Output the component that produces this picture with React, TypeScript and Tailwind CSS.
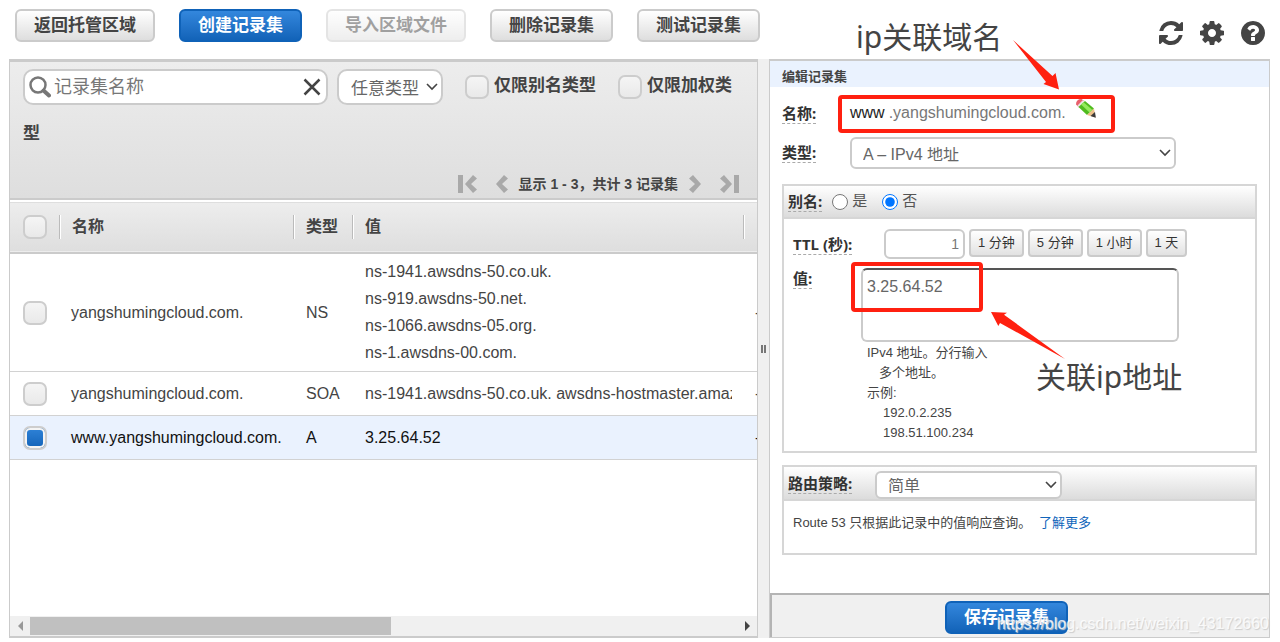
import type { ReactNode } from "react";
import clsx from "clsx";

const records = [
  {
    name: "yangshumingcloud.com.",
    type: "NS",
    values: [
      "ns-1941.awsdns-50.co.uk.",
      "ns-919.awsdns-50.net.",
      "ns-1066.awsdns-05.org.",
      "ns-1.awsdns-00.com.",
    ],
    selected: false,
  },
  {
    name: "yangshumingcloud.com.",
    type: "SOA",
    values: ["ns-1941.awsdns-50.co.uk. awsdns-hostmaster.amaz"],
    selected: false,
  },
  {
    name: "www.yangshumingcloud.com.",
    type: "A",
    values: ["3.25.64.52"],
    selected: true,
  },
];

const ttlPresets = ["1 分钟", "5 分钟", "1 小时", "1 天"];

const toolIcons = [
  {
    label: "刷新",
    path: "M1639 1056q0 5-1 7-64 268-268 434.5t-478 166.5q-146 0-282.5-55t-243.5-157l-129 129q-19 19-45 19t-45-19-19-45v-448q0-26 19-45t45-19h448q26 0 45 19t19 45-19 45l-137 137q71 66 161 102t187 36q134 0 250-65t186-179q11-17 53-117 8-23 30-23h192q13 0 22.5 9.5t9.5 22.5zm25-800v448q0 26-19 45t-45 19h-448q-26 0-45-19t-19-45 19-45l138-138q-148-137-349-137-134 0-250 65t-186 179q-11 17-53 117-8 23-30 23h-199q-13 0-22.5-9.5t-9.5-22.5v-7q65-268 270-434.5t480-166.5q146 0 284 55.5t245 156.5l130-129q19-19 45-19t45 19 19 45z",
  },
  {
    label: "设置",
    path: "M1152 896q0-106-75-181t-181-75-181 75-75 181 75 181 181 75 181-75 75-181zm512-109v222q0 12-8 23t-20 13l-185 28q-19 54-39 91 35 50 107 138 10 12 10 25t-9 23q-27 37-99 108t-94 71q-12 0-26-9l-138-108q-44 23-91 38-16 136-29 186-7 28-36 28h-222q-14 0-24.5-8.5t-11.5-21.5l-28-184q-49-16-90-37l-141 107q-10 9-25 9-14 0-25-11-126-114-165-168-7-10-7-23 0-12 8-23 15-21 51-66.5t54-70.5q-27-50-41-99l-183-27q-13-2-21-12.5t-8-23.5v-222q0-12 8-23t19-13l186-28q14-46 39-92-40-57-107-138-10-12-10-24 0-10 9-23 26-36 98.5-107.5t94.5-71.5q13 0 26 10l138 107q44-23 91-38 16-136 29-186 7-28 36-28h222q14 0 24.5 8.5t11.5 21.5l28 184q49 16 90 37l142-107q9-9 24-9 13 0 25 10 129 119 165 170 7 8 7 22 0 12-8 23-15 21-51 66.5t-54 70.5q26 50 41 98l183 28q13 2 21 12.5t8 23.5z",
  },
  {
    label: "帮助",
    path: "M1024 1376v-192q0-14-9-23t-23-9h-192q-14 0-23 9t-9 23v192q0 14 9 23t23 9h192q14 0 23-9t9-23zm256-672q0-88-55.5-163t-138.5-116-170-41q-243 0-371 213-15 24 8 42l132 100q7 6 19 6 16 0 25-12 53-68 86-92 34-24 86-24 48 0 85.5 26t37.5 59q0 38-20 61t-68 45q-63 28-115.5 86.5t-52.5 125.5v36q0 14 9 23t23 9h192q14 0 23-9t9-23q0-19 21.5-49.5t54.5-49.5q32-18 49-28.5t46-35 44.5-48 28-60.5 12.5-81zm384 192q0 209-103 385.5t-279.5 279.5-385.5 103-385.5-103-279.5-279.5-103-385.5 103-385.5 279.5-279.5 385.5-103 385.5 103 279.5 279.5 103 385.5z",
  },
];

function ToolbarButton({
  children,
  primary,
  disabled,
}: {
  children: ReactNode;
  primary?: boolean;
  disabled?: boolean;
}) {
  return (
    <button
      type="button"
      disabled={disabled}
      className={clsx(
        "h-[33px] shrink-0 rounded-md border-2 bg-linear-to-b px-[17px] text-[17px] leading-none font-bold whitespace-nowrap",
        primary
          ? "border-[#0f62b8] from-[#3387dd] to-[#1263b8] text-white"
          : "border-[#cbcbcb] from-white to-[#dedede] text-[#444]",
        disabled && "opacity-50",
      )}
    >
      {children}
    </button>
  );
}

function Checkbox({ id, label, checked }: { id: string; label?: string; checked?: boolean }) {
  return (
    <input
      id={id}
      type="checkbox"
      aria-label={label}
      defaultChecked={checked}
      className="size-6 appearance-none rounded-[7px] border-2 border-[#cdcdcd] bg-linear-to-b from-[#f5f5f5] to-[#e9e9e9] align-middle checked:from-[#2f83d8] checked:to-[#1263b8] checked:shadow-[inset_0_0_0_2px_#f4f4f4]"
    />
  );
}

function Chevron() {
  return (
    <svg
      viewBox="0 0 12 8"
      className="pointer-events-none absolute inset-y-0 right-[5px] my-auto h-2 w-3"
      fill="none"
      stroke="#444"
      strokeWidth="1.6"
    >
      <path d="M1 1l5 5 5-5" />
    </svg>
  );
}

function PagerArrow({ label, flip, bar }: { label: string; flip?: boolean; bar?: boolean }) {
  return (
    <button type="button" aria-label={label}>
      <svg
        viewBox={bar ? "0 0 20 18" : "7 0 13 18"}
        className={clsx("h-[18px]", bar ? "w-5" : "w-[13px]", flip && "-scale-x-100")}
        fill="#a9a9a9"
      >
        {bar && <path d="M0 0h5v18H0z" />}
        <path d="M15 0l4 3.500-6 5.500 6 5.500L15 18 7 9z" />
      </svg>
    </button>
  );
}

function FieldLabel({ htmlFor, children }: { htmlFor?: string; children: ReactNode }) {
  return (
    <label
      htmlFor={htmlFor}
      className="border-b border-dashed border-[#aaa] font-['Noto_Sans','Noto_Sans_CJK_SC',sans-serif] text-[15px] leading-[19px] font-bold whitespace-nowrap text-[#333]"
    >
      {children}
    </label>
  );
}

function Pencil() {
  return (
    <svg viewBox="0 0 20 20" className="h-5 w-5">
      <path d="M0 5.500Q0 0 5.500 0L8.500 2 3 8.500z" fill="#e8606c" />
      <path d="M1.500 6.500L7 1l2 1.500-5.500 6.500z" fill="#e9e4e4" />
      <path d="M2.500 8L9 2l9 7.500-7 6.500z" fill="#4fbb1e" />
      <path d="M5 5.600l2.500-2.300L16.500 11l-3 2.500z" fill="#93ea5c" />
      <path d="M11 16l7-6.500 1.500 9z" fill="#ecc08a" />
      <path d="M14.500 17l4.500-4 .8 5.800z" fill="#3b3b3b" />
    </svg>
  );
}

function Toolbar() {
  return (
    <header className="flex h-[59px] shrink-0 items-start gap-6 pt-[9px] pr-[15px] pl-[15px]">
      <ToolbarButton>返回托管区域</ToolbarButton>
      <ToolbarButton primary>创建记录集</ToolbarButton>
      <ToolbarButton disabled>导入区域文件</ToolbarButton>
      <ToolbarButton>删除记录集</ToolbarButton>
      <ToolbarButton>测试记录集</ToolbarButton>
      <div className="ml-auto flex gap-[17px] pt-3">
        {toolIcons.map((icon) => (
          <button key={icon.label} type="button" aria-label={icon.label}>
            <svg viewBox="128 128 1536 1536" className="size-6" fill="#444">
              <path d={icon.path} />
            </svg>
          </button>
        ))}
      </div>
    </header>
  );
}

function Filters() {
  return (
    <div className="border-b-2 border-[#cbcbcb] bg-linear-to-b from-[#ededed] to-[#dedede] px-[13px]">
      <div className="text-[17px] leading-[48px] font-bold text-[#444]">
        <span className="mr-[9px] inline-flex h-9 w-[305px] items-center rounded-[10px] border-2 border-[#cbcbcb] bg-white px-1 align-middle">
          <svg viewBox="0 0 22 22" className="size-[22px] shrink-0" fill="none" stroke="#777">
            <circle cx="9" cy="9" r="7.500" strokeWidth="2.500" />
            <path d="M14.500 14.500l5.500 5" strokeWidth="4" strokeLinecap="round" />
          </svg>
          <input
            type="text"
            aria-label="记录集名称"
            placeholder="记录集名称"
            className="min-w-0 flex-1 pl-[3px] text-lg font-normal outline-none placeholder:text-[#777]"
          />
          <button type="button" aria-label="清除" className="mr-px">
            <svg viewBox="0 0 18 18" className="size-[18px]" stroke="#444" strokeWidth="2.500">
              <path d="M1.500 1.500l15 15M16.500 1.500l-15 15" />
            </svg>
          </button>
        </span>
        <span className="relative mr-[22px] inline-block h-9 w-[106px] align-middle leading-none">
          <select
            aria-label="类型筛选"
            className="h-full w-full appearance-none rounded-[10px] border-2 border-[#cbcbcb] bg-white pt-[3px] pl-3 text-[17px] font-normal text-[#666]"
          >
            <option>任意类型</option>
          </select>
          <Chevron />
        </span>
        <Checkbox id="alias-only" />
        <label htmlFor="alias-only" className="mr-[22px] pl-[5px]">
          仅限别名类型
        </label>
        <Checkbox id="weighted-only" />
        <label htmlFor="weighted-only" className="pl-[5px]">
          仅限加权类型
        </label>
      </div>
      <div className="flex items-center justify-end pt-[17px] pr-[5px] pb-[5px] text-sm leading-[18px] font-bold text-[#444]">
        <PagerArrow label="第一页" bar />
        <span className="w-[18px]" />
        <PagerArrow label="上一页" />
        <span className="px-[10px]">显示 1 - 3，共计 3 记录集</span>
        <PagerArrow label="下一页" flip />
        <span className="w-[18px]" />
        <PagerArrow label="最后一页" bar flip />
      </div>
    </div>
  );
}

function HeaderCell({ children }: { children?: ReactNode }) {
  return (
    <div className="h-6 border-l border-[#bbb] pl-3 leading-6 shadow-[inset_1px_0_0_#fff]">
      {children}
    </div>
  );
}

function RecordTable() {
  return (
    <table className="w-full table-fixed text-left text-base text-[#444]">
      <colgroup>
        <col className="w-[49px]" />
        <col className="w-[234px]" />
        <col className="w-[59px]" />
        <col />
        <col className="w-[14px]" />
      </colgroup>
      <thead>
        <tr className="h-[52px] border-t-2 border-b-2 border-t-white border-b-[#cbcbcb] bg-linear-to-b from-[#ededed] to-[#dedede]">
          <th className="pl-[13px]">
            <Checkbox id="select-all" label="全选" />
          </th>
          <th>
            <HeaderCell>名称</HeaderCell>
          </th>
          <th>
            <HeaderCell>类型</HeaderCell>
          </th>
          <th>
            <HeaderCell>值</HeaderCell>
          </th>
          <th>
            <HeaderCell />
          </th>
        </tr>
      </thead>
      <tbody>
        {records.map((record, index) => (
          <tr
            key={record.type}
            className={clsx(
              "border-b border-[#d2d2d2]",
              record.selected && "bg-[#eaf2fe] text-[#111]",
            )}
          >
            <td className="pl-[13px]">
              <Checkbox id={`record-${index}`} label={record.name} checked={record.selected} />
            </td>
            <td className="pl-3">{record.name}</td>
            <td className="pl-[13px]">{record.type}</td>
            <td
              className={clsx(
                "pl-[13px] leading-[27px] whitespace-nowrap",
                record.values.length > 1 ? "pt-1 pb-[5px]" : "py-2",
              )}
            >
              {record.values.map((value) => (
                <div key={value} className="mr-[11px] overflow-hidden">
                  {value}
                </div>
              ))}
            </td>
            <td className="overflow-hidden pl-3">-</td>
          </tr>
        ))}
      </tbody>
    </table>
  );
}

function RecordList() {
  return (
    <section className="flex min-w-0 flex-1 flex-col border border-t-[3px] border-b-2 border-[#cbcbcb]">
      <Filters />
      <RecordTable />
      <div className="mt-auto flex h-5 items-center bg-[#f0f0f0]" aria-hidden="true">
        <svg viewBox="0 0 20 20" className="size-5" fill="#999">
          <path d="M13 5v10L8 10z" />
        </svg>
        <div className="flex-1">
          <div className="h-[18px] w-[51%] bg-[#c0c0c0]" />
        </div>
        <svg viewBox="0 0 20 20" className="size-5" fill="#444">
          <path d="M8 5v10l5-5z" />
        </svg>
      </div>
    </section>
  );
}

function AliasBox() {
  return (
    <div className="mt-[15px] border-2 border-[#d6d6d6]">
      <div className="flex h-[33px] items-center border-b-2 border-[#d6d6d6] bg-linear-to-b from-white to-[#dcdcdc] pl-1 text-[15px] text-[#555]">
        <FieldLabel>别名:</FieldLabel>
        <label className="ml-[10px] flex items-center gap-1">
          <input type="radio" name="alias" className="size-4" />是
        </label>
        <label className="ml-[15px] flex items-center gap-1">
          <input type="radio" name="alias" defaultChecked className="size-4 accent-[#0075ff]" />否
        </label>
      </div>
      <div className="px-[9px] pb-2">
        <div className="flex items-start pt-[10px]">
          <div className="flex w-[91px] shrink-0 pt-[6px]">
            <FieldLabel htmlFor="ttl">TTL (秒):</FieldLabel>
          </div>
          <div className="flex items-start gap-1">
            <input
              id="ttl"
              type="text"
              defaultValue="1"
              className="h-[30px] w-[81px] rounded-md border-2 border-[#cbcbcb] px-1 text-right text-sm text-[#777]"
            />
            {ttlPresets.map((preset) => (
              <button
                key={preset}
                type="button"
                className="h-7 rounded-sm border-2 border-[#cbcbcb] bg-linear-to-b from-white to-[#e2e2e2] px-[7px] text-[13px] whitespace-nowrap text-[#333]"
              >
                {preset}
              </button>
            ))}
          </div>
        </div>
        <div className="flex items-start pt-[9px]">
          <div className="flex w-[68px] shrink-0 pt-px">
            <FieldLabel htmlFor="value">值:</FieldLabel>
          </div>
          <div className="relative">
            <textarea
              id="value"
              defaultValue="3.25.64.52"
              className="block h-[74px] w-[318px] resize-none rounded-md border-2 border-[#cbcbcb] border-t-[#555] px-1 py-[5px] text-base text-[#666]"
            />
            <div className="pointer-events-none absolute -top-[6px] -left-[10px] h-[50px] w-[132px] rounded-sm border-4 border-[#ff2010]" />
            <div className="pt-px pl-[6px] text-[13px] leading-[20px] text-[#444]">
              <p>IPv4 地址。分行输入</p>
              <p className="pl-3">多个地址。</p>
              <p>示例:</p>
              <p className="pl-4">192.0.2.235</p>
              <p className="pl-4">198.51.100.234</p>
            </div>
          </div>
        </div>
      </div>
    </div>
  );
}

function RoutingBox() {
  return (
    <div className="mt-3 border-2 border-[#d6d6d6]">
      <div className="flex h-[34px] items-end border-b-2 border-[#d6d6d6] bg-linear-to-b from-white to-[#dcdcdc] pl-1">
        <div className="flex w-[87px] pb-[5px]">
          <FieldLabel htmlFor="routing">路由策略:</FieldLabel>
        </div>
        <div className="relative w-[187px]">
          <select
            id="routing"
            className="block h-7 w-full appearance-none rounded-md border-2 border-[#cbcbcb] bg-white pt-px pl-[11px] text-base leading-none text-[#666]"
          >
            <option>简单</option>
          </select>
          <Chevron />
        </div>
      </div>
      <p className="px-[9px] pt-3 pb-5 text-[13px] leading-5 text-[#444]">
        Route 53 只根据此记录中的值响应查询。{" "}
        <a href="#routing" className="ml-1 text-[#1166bb]">
          了解更多
        </a>
      </p>
    </div>
  );
}

// Callouts that sit over the edit panel
function Callouts() {
  return (
    <div className="pointer-events-none absolute inset-0 font-['Noto_Sans','Noto_Sans_CJK_SC',sans-serif] text-[30px] leading-9 whitespace-nowrap text-[#444]">
      <span className="absolute -top-[42px] left-[86px]">ip关联域名</span>
      <span className="absolute top-[298px] left-[266px]">关联ip地址</span>
      <svg
        viewBox="0 0 320 330"
        className="absolute -top-6 left-0 h-[330px] w-[320px]"
        fill="#ff2010"
      >
        <path d="M243 3L282.500 39l3-3L289 52.500l-15.500-5.500 2.500-2z" />
        <path d="M221 275l16 .7-3 2L295 322 230 286l-1.700 3z" />
      </svg>
    </div>
  );
}

function EditPanel() {
  return (
    <section className="relative flex w-[501px] shrink-0 flex-col border border-t-2 border-[#cbcbcb]">
      <h2 className="bg-[#eaf2fe] px-3 pt-[6px] text-[13px] leading-5 font-bold text-[#444]">
        编辑记录集
      </h2>
      <div className="flex-1 px-3 pb-9">
        <div className="flex items-center pt-2">
          <div className="flex w-[56px]">
            <FieldLabel>名称:</FieldLabel>
          </div>
          <div className="flex h-[38px] w-[277px] items-center rounded-sm border-4 border-[#ff2010] pb-[2px] pl-2 text-base">
            <span className="text-[#222]">www</span>
            <span className="pl-1 text-[#777]">.yangshumingcloud.com.</span>
            <button type="button" aria-label="编辑名称" className="ml-[10px] pb-2">
              <Pencil />
            </button>
          </div>
        </div>
        <div className="flex items-center pt-[4px]">
          <div className="flex w-[68px]">
            <FieldLabel htmlFor="type">类型:</FieldLabel>
          </div>
          <div className="relative w-[326px]">
            <select
              id="type"
              className="block h-8 w-full appearance-none rounded-md border-2 border-[#cbcbcb] bg-white pt-[4px] pl-[11px] text-base leading-none text-[#666]"
            >
              <option>A – IPv4 地址</option>
            </select>
            <Chevron />
          </div>
        </div>
        <AliasBox />
        <RoutingBox />
      </div>
      <footer className="relative border-t-2 border-l-2 border-[#b4b4b4] bg-[#f0f0f0] px-[173px] pt-[6px] pb-[3px]">
        <ToolbarButton primary>保存记录集</ToolbarButton>
        <span className="pointer-events-none absolute right-0 bottom-px text-base whitespace-nowrap text-white/80 [text-shadow:1px_1px_1px_#ccc]">
          https://blog.csdn.net/weixin_43172660
        </span>
      </footer>
      <Callouts />
    </section>
  );
}

export default function App() {
  return (
    <div
      lang="zh-CN"
      className="flex min-h-screen flex-col bg-white font-['Liberation_Sans','Noto_Sans_CJK_SC',sans-serif]"
    >
      <Toolbar />
      <main className="flex flex-1 pr-[10px] pb-[4px] pl-[9px]">
        <RecordList />
        <div className="flex w-[11px] shrink-0 items-center justify-center gap-px bg-[#f0f0f0]">
          <span className="h-2 w-[2px] bg-[#777]" />
          <span className="h-2 w-[2px] bg-[#777]" />
        </div>
        <EditPanel />
      </main>
    </div>
  );
}
